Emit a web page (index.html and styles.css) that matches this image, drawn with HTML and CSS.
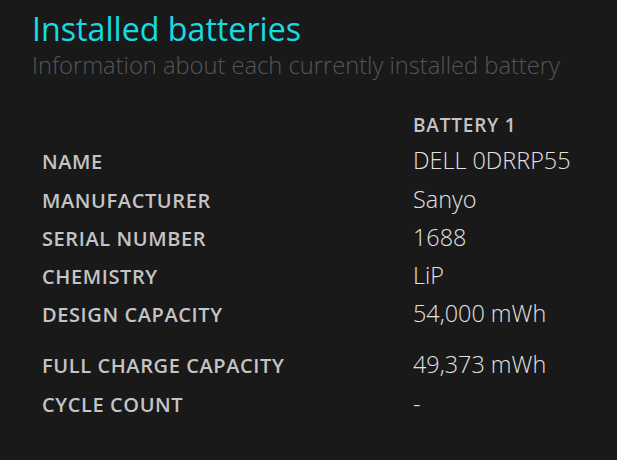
FILE: index.html
```html
<!DOCTYPE html>
<html>
<head>
<meta charset="utf-8">
<link rel="stylesheet" href="styles.css">
</head>
<body>
<div class="page">
  <h1 class="title">Installed batteries</h1>
  <p class="subtitle">Information about each currently installed battery</p>
  <div class="table">
    <div class="row head-row"><div class="label"></div><div class="head">BATTERY 1</div></div>
    <div class="row"><div class="label">NAME</div><div class="value">DELL 0DRRP55</div></div>
    <div class="row"><div class="label">MANUFACTURER</div><div class="value">Sanyo</div></div>
    <div class="row"><div class="label">SERIAL NUMBER</div><div class="value">1688</div></div>
    <div class="row"><div class="label">CHEMISTRY</div><div class="value">LiP</div></div>
    <div class="row"><div class="label">DESIGN CAPACITY</div><div class="value">54,000 mWh</div></div>
    <div class="spacer"></div>
    <div class="row"><div class="label">FULL CHARGE CAPACITY</div><div class="value">49,373 mWh</div></div>
    <div class="row"><div class="label">CYCLE COUNT</div><div class="value">-</div></div>
  </div>
</div>
</body>
</html>
```
FILE: styles.css
```css
html, body {
  margin: 0;
  padding: 0;
  background: #191919;
  height: 100%;
}
.page {
  padding: 9px 0 0 32px;
  font-family: "Open Sans", "Noto Sans", sans-serif;
}
.title {
  margin: 0;
  font-size: 32.2px;
  font-weight: 400;
  color: #16dbe2;
  line-height: 40px;
}
.subtitle {
  margin: 0;
  font-size: 23.7px;
  font-weight: 300;
  color: #565656;
  line-height: 33px;
}
.table {
  margin-left: 10px;
  margin-top: 24.4px;
  display: flex;
  flex-direction: column;
}
.row {
  display: flex;
  align-items: baseline;
  height: 38.25px;
  line-height: 38.5px;
}
.row.head-row {
  height: 35px;
}
.label {
  width: 371px;
  flex: none;
  font-size: 20px;
  font-weight: 600;
  color: #c4c4c4;
  letter-spacing: 0.6px;
}
.head {
  font-size: 19px;
  font-weight: 600;
  color: #c4c4c4;
  letter-spacing: 0.8px;
}
.value {
  font-size: 23.4px;
  font-weight: 300;
  color: #e2e2e2;
}
.spacer {
  height: 12.75px;
  flex: none;
}
```
